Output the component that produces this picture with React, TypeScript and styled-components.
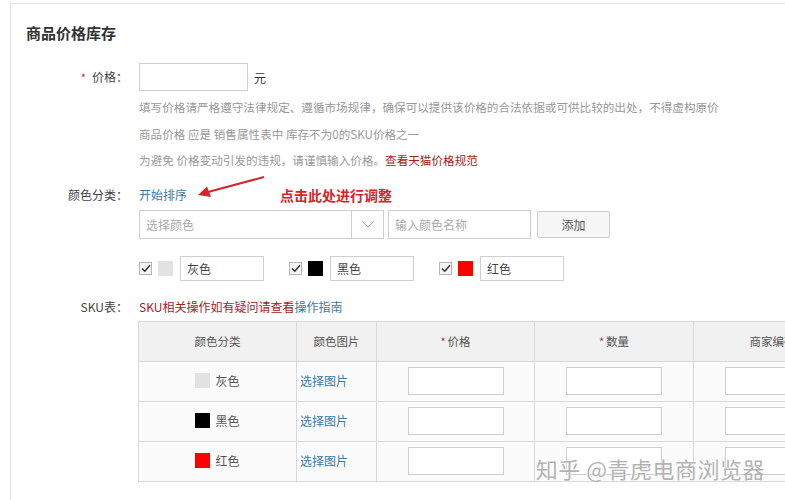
import * as React from 'react';
import styled, { createGlobalStyle } from 'styled-components';

const GlobalStyle = createGlobalStyle`
  html, body {
    margin: 0;
    padding: 0;
    background: #fff;
    overflow: hidden;
  }
  body {
    font-family: "Noto Sans CJK SC", "Liberation Sans", sans-serif;
    font-size: 12px;
    color: #333;
  }
`;

const color = {
  line: '#e3e3e3',
  border: '#cfcfcf',
  muted: '#999',
  link: '#3b77a6',
  darkRed: '#a8201a',
  red: '#d3262b',
  star: '#c2303a'
};

interface Swatch {
  name: string;
  hex: string;
}

const swatches: Swatch[] = [
  { name: '灰色', hex: '#e2e2e2' },
  { name: '黑色', hex: '#000' },
  { name: '红色', hex: '#f00' }
];

const Page = styled.div`
  position: relative;
  width: 785px;
  height: 500px;
  overflow: hidden;
`;

const Panel = styled.div`
  margin: 3px 0 0 10px;
  height: 497px;
  border-left: 1px solid ${color.line};
  border-top: 1px solid ${color.line};
  padding-top: 19px;
  box-sizing: border-box;
`;

const Title = styled.h2`
  margin: 0 0 0 15px;
  font-size: 15px;
  line-height: 20px;
  font-weight: 600;
  color: #333;
`;

const Field = styled.div<{ $top: number }>`
  display: flex;
  align-items: center;
  margin-top: ${p => p.$top}px;
`;

const Label = styled.div`
  width: 117px;
  flex: none;
  text-align: right;
  font-size: 12px;
  line-height: 20px;
  color: #444;
`;

const Star = styled.span<{ $gap?: number }>`
  color: ${color.star};
  margin-right: ${p => (p.$gap === undefined ? 6 : p.$gap)}px;
  font-size: 11px;
`;

const Body = styled.div`
  margin-left: 11px;
  display: flex;
  align-items: center;
`;

const Indented = styled.div<{ $top?: number }>`
  margin-left: 128px;
  margin-top: ${p => p.$top || 0}px;
`;

const TextBox = styled.div<{ $w: number; $h: number }>`
  width: ${p => p.$w}px;
  height: ${p => p.$h}px;
  border: 1px solid ${color.border};
  background: #fff;
  box-sizing: border-box;
  display: flex;
  align-items: center;
  padding-left: 6px;
  font-size: 12px;
  color: #444;
`;

const Placeholder = styled.span`
  color: #aaa;
`;

const Unit = styled.span`
  margin-left: 6px;
  font-size: 12px;
`;

const Help = styled.p`
  margin: 0;
  font-size: 11.6px;
  line-height: 26.5px;
  color: ${color.muted};
  white-space: nowrap;
`;

const RuleLink = styled.a`
  color: ${color.darkRed};
  text-decoration: none;
`;

const Link = styled.a`
  color: ${color.link};
  text-decoration: none;
  font-size: 12px;
  line-height: 20px;
`;

const Arrow = styled.svg`
  flex: none;
  margin-left: 11px;
  overflow: visible;
`;

const Note = styled.span`
  margin-left: 12px;
  color: ${color.red};
  font-size: 14px;
  font-weight: 700;
  line-height: 20px;
`;

const Select = styled.div`
  width: 245px;
  height: 29px;
  border: 1px solid ${color.border};
  box-sizing: border-box;
  display: flex;
  background: #fff;
`;

const SelectText = styled.div`
  flex: 1;
  display: flex;
  align-items: center;
  padding-left: 6px;
  color: #aaa;
`;

const SelectCaret = styled.div`
  width: 31px;
  border-left: 1px solid ${color.border};
  display: flex;
  align-items: center;
  justify-content: center;
`;

const Button = styled.div`
  margin-left: 6px;
  width: 73px;
  height: 27px;
  border: 1px solid ${color.border};
  border-radius: 2px;
  background: #f6f6f6;
  box-sizing: border-box;
  display: flex;
  align-items: center;
  justify-content: center;
  color: #555;
`;

const Gap = styled.div<{ $w: number }>`
  width: ${p => p.$w}px;
  flex: none;
`;

const ColorRow = styled.div`
  display: flex;
  gap: 25px;
`;

const ColorItem = styled.div`
  display: flex;
  align-items: center;
`;

const Check = styled.span`
  width: 13px;
  height: 13px;
  border: 1px solid #b5b5b5;
  background: #f4f4f4;
  box-sizing: border-box;
  display: flex;
  align-items: center;
  justify-content: center;
`;

const Chip = styled.span<{ $hex: string; $size: number }>`
  display: inline-block;
  flex: none;
  width: ${p => p.$size}px;
  height: ${p => p.$size}px;
  background: ${p => p.$hex};
`;

const SkuNote = styled.span`
  color: ${color.darkRed};
  font-size: 12px;
  line-height: 20px;
`;

const Table = styled.table`
  margin: 4px 0 0 127px;
  border-collapse: collapse;
  table-layout: fixed;
  width: 709px;
`;

const Th = styled.th<{ $w: number }>`
  width: ${p => p.$w}px;
  height: 39px;
  padding: 0;
  background: #f1f1f1;
  border: 1px solid #d9d9d9;
  font-size: 11.5px;
  font-weight: normal;
  color: #555;
  text-align: center;
  white-space: nowrap;
  overflow: hidden;
`;

const Td = styled.td<{ $align?: string }>`
  height: 39px;
  padding: 0 0 0 ${p => (p.$align === 'left' ? 3 : 0)}px;
  background: #fbfbfb;
  border: 1px solid #d9d9d9;
  text-align: ${p => p.$align || 'center'};
  font-size: 12px;
  color: #555;
`;

const CellColor = styled.span`
  display: inline-flex;
  align-items: center;
  gap: 5px;
`;

const CellInput = styled.div`
  display: inline-block;
  width: 96px;
  height: 28px;
  border: 1px solid ${color.border};
  background: #fff;
  box-sizing: border-box;
  vertical-align: middle;
`;

const Watermark = styled.div`
  position: absolute;
  right: 20px;
  bottom: 17px;
  font-size: 22px;
  line-height: 30px;
  color: #b3b3b3;
  letter-spacing: 0.5px;
  text-shadow: 0 0 2px #fff, 0 0 2px #fff;
`;

const CheckMark = () => (
  <svg width="10" height="9" viewBox="0 0 10 9">
    <path d="M1 4.5 L3.8 7.2 L9 1.2" fill="none" stroke="#333" strokeWidth="1.5" />
  </svg>
);

export default function App() {
  return (
    <Page>
      <GlobalStyle />
      <Panel>
        <Title>商品价格库存</Title>

        <Field $top={20}>
          <Label>
            <Star>*</Star>价格：
          </Label>
          <Body>
            <TextBox $w={109} $h={28} />
            <Unit>元</Unit>
          </Body>
        </Field>

        <Indented $top={3}>
          <Help>填写价格请严格遵守法律规定、遵循市场规律，确保可以提供该价格的合法依据或可供比较的出处，不得虚构原价</Help>
          <Help>商品价格 应是 销售属性表中 库存不为0的SKU价格之一</Help>
          <Help>
            为避免 价格变动引发的违规，请谨慎输入价格。<RuleLink>查看天猫价格规范</RuleLink>
          </Help>
        </Indented>

        <Field $top={11}>
          <Label>颜色分类：</Label>
          <Body>
            <Link>开始排序</Link>
            <Arrow width="70" height="20" viewBox="0 0 70 20">
              <line x1="66" y1="-8" x2="10" y2="7" stroke={color.red} strokeWidth="2" />
              <polygon points="0,10 9,1.5 13,12" fill={color.red} />
            </Arrow>
            <Note>点击此处进行调整</Note>
          </Body>
        </Field>

        <Indented $top={5}>
          <ColorItem>
            <Select>
              <SelectText>选择颜色</SelectText>
              <SelectCaret>
                <svg width="14" height="8" viewBox="0 0 14 8">
                  <path d="M1 1 L7 7 L13 1" fill="none" stroke="#aaa" strokeWidth="1" />
                </svg>
              </SelectCaret>
            </Select>
            <Gap $w={4} />
            <TextBox $w={143} $h={29}>
              <Placeholder>输入颜色名称</Placeholder>
            </TextBox>
            <Button>添加</Button>
          </ColorItem>
        </Indented>

        <Indented $top={17}>
          <ColorRow>
            {swatches.map(s => (
              <ColorItem key={s.name}>
                <Check>
                  <CheckMark />
                </Check>
                <Gap $w={6} />
                <Chip $hex={s.hex} $size={15} />
                <Gap $w={7} />
                <TextBox $w={84} $h={25}>{s.name}</TextBox>
              </ColorItem>
            ))}
          </ColorRow>
        </Indented>

        <Field $top={16}>
          <Label>SKU表：</Label>
          <Body>
            <SkuNote>SKU相关操作如有疑问请查看</SkuNote>
            <Link>操作指南</Link>
          </Body>
        </Field>

        <Table>
          <thead>
            <tr>
              <Th $w={157}>颜色分类</Th>
              <Th $w={79}>颜色图片</Th>
              <Th $w={157}>
                <Star $gap={2}>*</Star>价格
              </Th>
              <Th $w={158}>
                <Star $gap={2}>*</Star>数量
              </Th>
              <Th $w={157}>商家编码</Th>
            </tr>
          </thead>
          <tbody>
            {swatches.map(s => (
              <tr key={s.name}>
                <Td>
                  <CellColor>
                    <Chip $hex={s.hex} $size={15} />
                    {s.name}
                  </CellColor>
                </Td>
                <Td $align="left">
                  <Link>选择图片</Link>
                </Td>
                <Td>
                  <CellInput />
                </Td>
                <Td>
                  <CellInput />
                </Td>
                <Td>
                  <CellInput />
                </Td>
              </tr>
            ))}
          </tbody>
        </Table>
      </Panel>
      <Watermark>知乎 @青虎电商浏览器</Watermark>
    </Page>
  );
}
